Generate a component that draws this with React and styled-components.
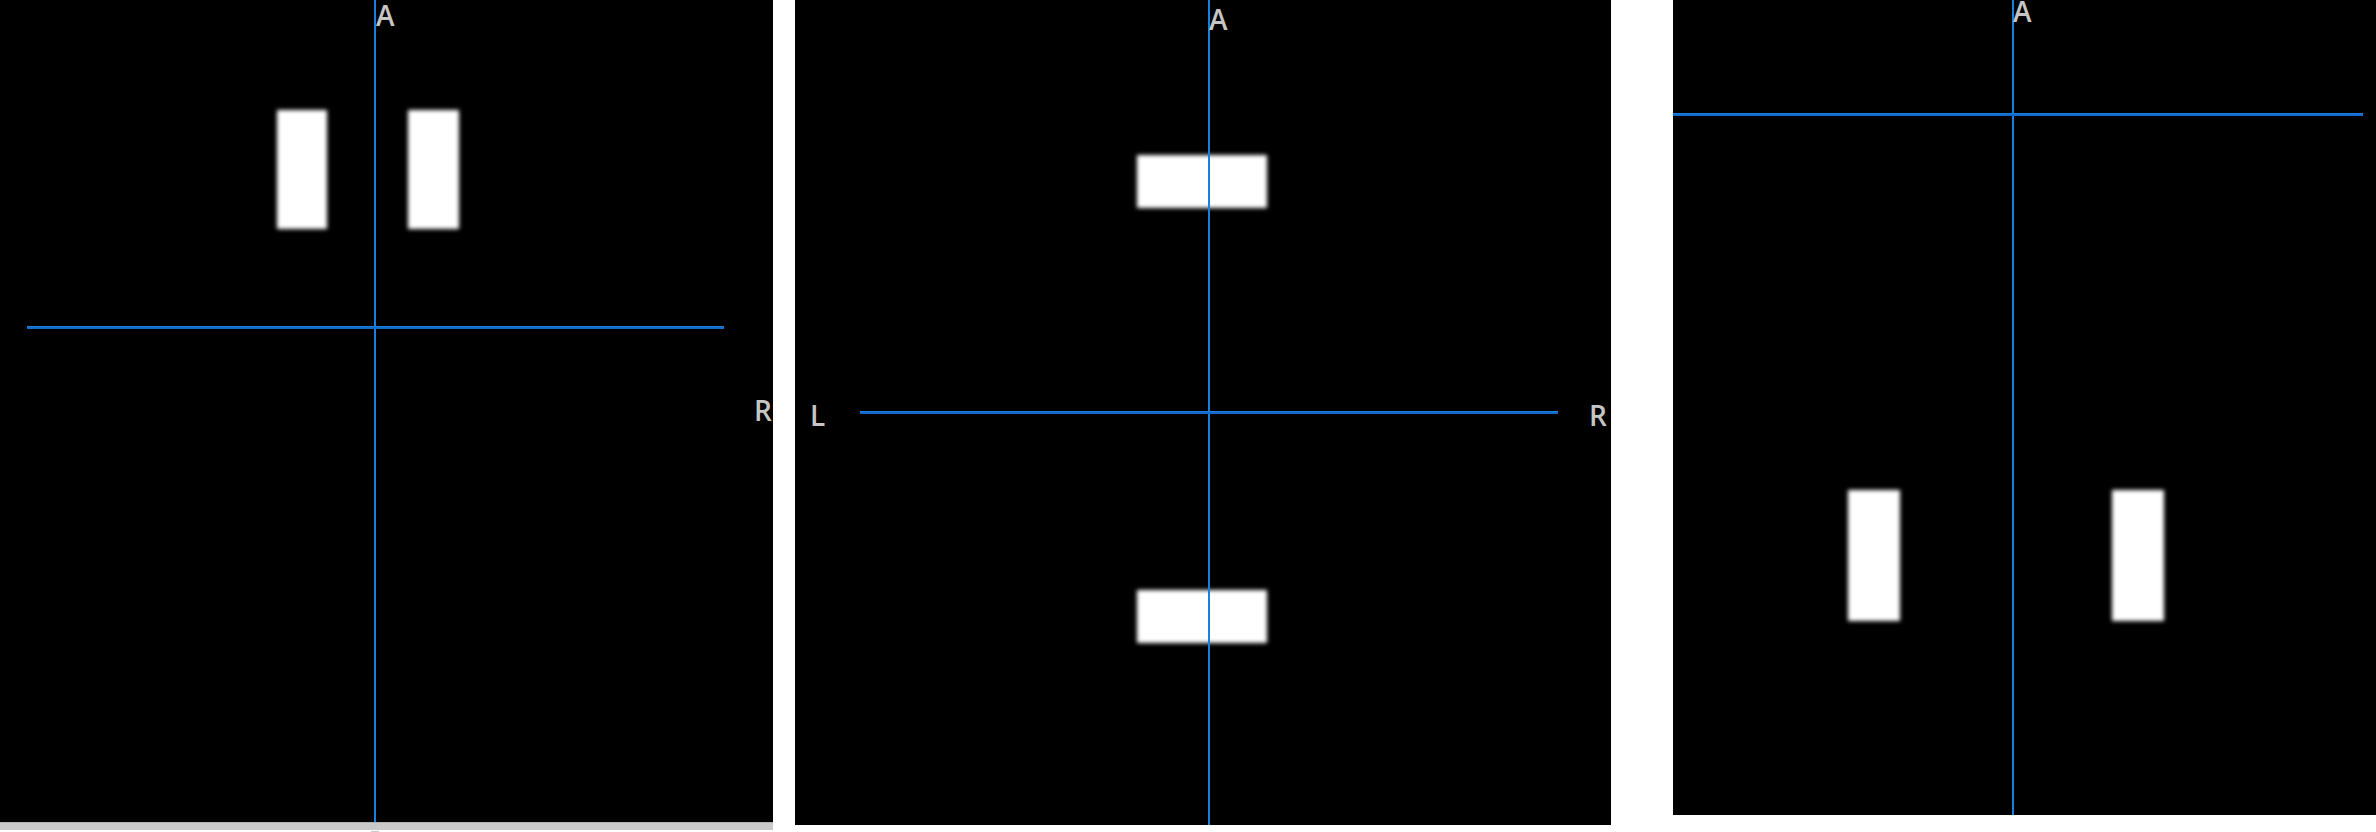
import React from 'react'
import styled, { createGlobalStyle } from 'styled-components'

const Global = createGlobalStyle`
  html, body {
    margin: 0;
    padding: 0;
    background: #ffffff;
    font-family: "Open Sans", "Noto Sans", "DejaVu Sans", sans-serif;
  }
`

const Page = styled.div`
  display: flex;
  align-items: flex-start;
  gap: 22px;
  width: 2376px;
  height: 832px;
  overflow: hidden;
`

const Column = styled.div`
  display: flex;
  flex-direction: column;
  flex-shrink: 0;
`

// black viewport: the bars sit in it by flow, axes and labels lie over it
const Viewport = styled.div`
  position: relative;
  display: flex;
  flex-direction: ${p => p.$dir || 'row'};
  align-items: flex-start;
  gap: ${p => p.$gap}px;
  box-sizing: border-box;
  width: ${p => p.$w}px;
  height: ${p => p.$h}px;
  padding: ${p => p.$pad};
  background: #000;
  overflow: hidden;
  flex-shrink: 0;
  margin-left: ${p => p.$ml || 0}px;
`

const AxisV = styled.div`
  position: absolute;
  top: 0;
  bottom: 0;
  left: ${p => p.$x}px;
  width: 2px;
  background: #1a80de;
`

const AxisH = styled.div`
  position: absolute;
  top: ${p => p.$y}px;
  left: ${p => p.$x}px;
  width: ${p => p.$w}px;
  height: 3px;
  background: #136ccb;
  box-shadow: inset 0 1px 0 #1c7fdc;
`

const Label = styled.span`
  position: absolute;
  top: ${p => p.$y}px;
  left: ${p => p.$x}px;
  font-size: 28px;
  line-height: 0.8;
  color: #c6c6c6;
  font-weight: 600;
`

const Bar = styled.div`
  width: ${p => p.$w}px;
  height: ${p => p.$h}px;
  background: #fff;
  filter: blur(2px);
  flex-shrink: 0;
`

const ScrollTrack = styled.div`
  position: relative;
  width: 773px;
  height: 8px;
  background: #c9c9c9;
  border-top: 1px solid #b3b3b3;
  box-sizing: border-box;
`

const ScrollTab = styled.div`
  position: absolute;
  top: 8px;
  left: 371px;
  width: 8px;
  height: 2px;
  background: #c9c9c9;
`

const Coronal = () => (
  <Column>
    <Viewport $w={773} $h={822} $pad="110px 0 0 277px" $gap={81}>
      <Bar $w={50} $h={119} />
      <Bar $w={51} $h={119} />
      <AxisV $x={374} />
      <AxisH $x={27} $y={326} $w={697} />
      <Label $x={376} $y={4}>A</Label>
      <Label $x={754} $y={399}>R</Label>
    </Viewport>
    <ScrollTrack>
      <ScrollTab />
    </ScrollTrack>
  </Column>
)

const Axial = () => (
  <Viewport $w={816} $h={825} $dir="column" $pad="155px 0 0 342px" $gap={382}>
    <Bar $w={130} $h={53} />
    <Bar $w={130} $h={53} />
    <AxisV $x={413} />
    <AxisH $x={65} $y={411} $w={698} />
    <Label $x={414} $y={8}>A</Label>
    <Label $x={15} $y={404}>L</Label>
    <Label $x={794} $y={404}>R</Label>
  </Viewport>
)

const Sagittal = () => (
  <Viewport $w={703} $h={815} $ml={40} $pad="490px 0 0 175px" $gap={212}>
    <Bar $w={52} $h={131} />
    <Bar $w={52} $h={131} />
    <AxisV $x={339} />
    <AxisH $x={0} $y={113} $w={690} />
    <Label $x={340} $y={0}>A</Label>
  </Viewport>
)

export default function App() {
  return (
    <>
      <Global />
      <Page>
        <Coronal />
        <Axial />
        <Sagittal />
      </Page>
    </>
  )
}
